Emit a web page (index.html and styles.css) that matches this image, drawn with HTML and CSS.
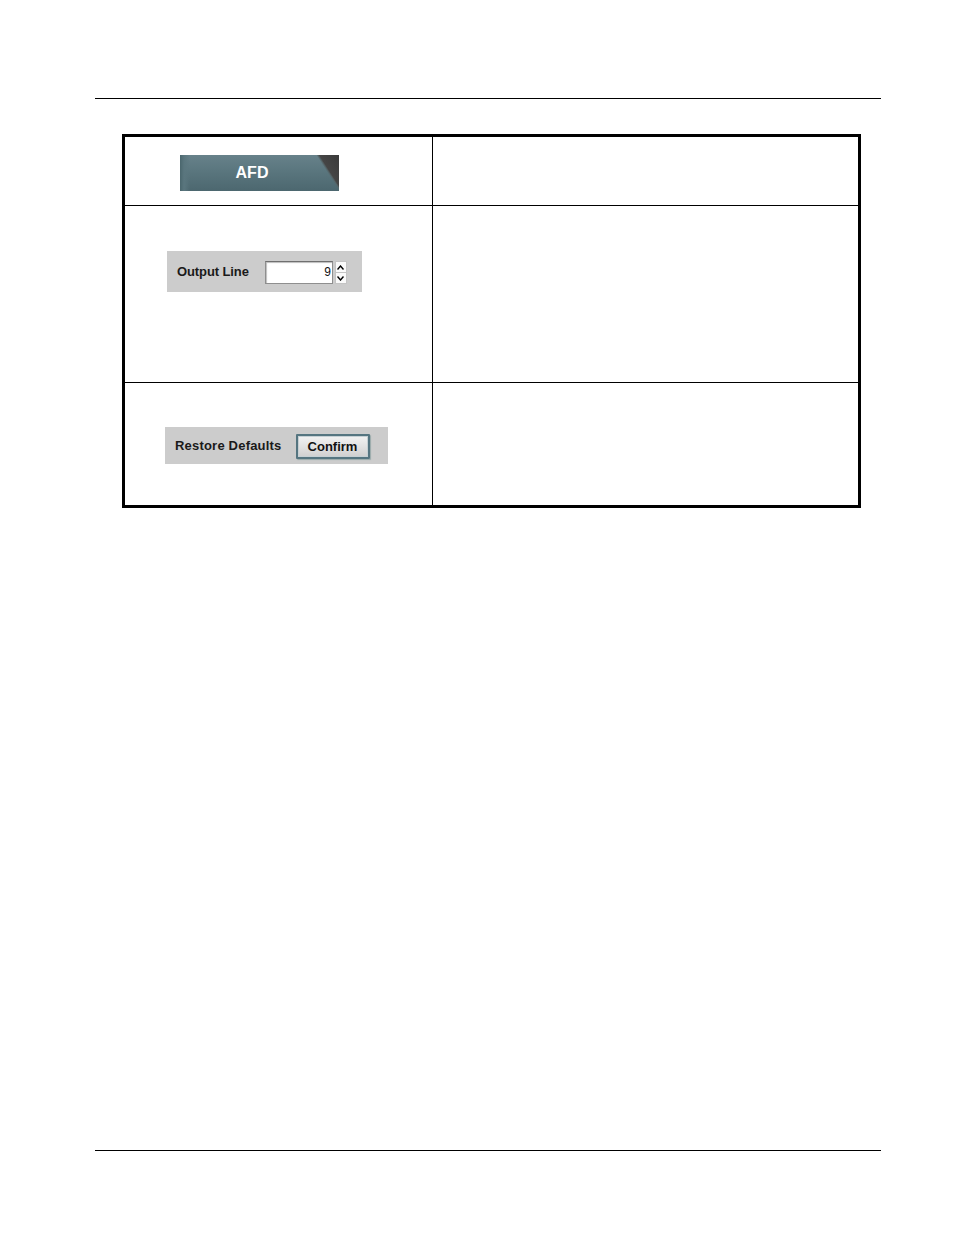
FILE: index.html
```html
<!DOCTYPE html>
<html>
<head>
<meta charset="utf-8">
<link rel="stylesheet" href="styles.css">
</head>
<body>
<div class="page">
  <div class="rule"></div>
  <div class="table">
    <div class="cell left r1">
      <div class="afd">AFD</div>
    </div>
    <div class="cell right r1"></div>
    <div class="cell left r2">
      <div class="panel panel-out">
        <span class="label">Output Line</span>
        <div class="spin">
          <div class="spin-input">9</div>
          <div class="spin-btns">
            <div class="sb">
              <svg width="7" height="5" viewBox="0 0 7 5"><path d="M0.5 4.5 L3.5 1 L6.5 4.5" fill="none" stroke="#000" stroke-width="1.4"/></svg>
            </div>
            <div class="sb">
              <svg width="7" height="5" viewBox="0 0 7 5"><path d="M0.5 0.5 L3.5 4 L6.5 0.5" fill="none" stroke="#000" stroke-width="1.4"/></svg>
            </div>
          </div>
        </div>
      </div>
    </div>
    <div class="cell right r2"></div>
    <div class="cell left r3 last">
      <div class="panel panel-rest">
        <span class="label label-rest">Restore Defaults</span>
        <div class="confirm">Confirm</div>
      </div>
    </div>
    <div class="cell right r3 last"></div>
  </div>
  <div class="rule footer"></div>
</div>
</body>
</html>
```

FILE: styles.css
```css
html, body {
  margin: 0;
  padding: 0;
  background: #fff;
}
body {
  font-family: "Liberation Sans", Arial, sans-serif;
}
.page {
  height: 1235px;
  box-sizing: border-box;
  padding: 98px 73px 84px 95px;
  display: flex;
  flex-direction: column;
}
.rule {
  height: 1px;
  background: #000;
  width: 786px;
}
.footer {
  margin-top: auto;
}
.table {
  margin-top: 35px;
  margin-left: 27px;
  width: 739px;
  box-sizing: border-box;
  border: 3px solid #000;
  display: grid;
  grid-template-columns: 308px 425px;
}
.cell {
  border-bottom: 1px solid #000;
  box-sizing: content-box;
}
.cell.left {
  border-right: 1px solid #000;
}
.cell.last {
  border-bottom: none;
}
.r1 { height: 68px; }
.r2 { height: 176px; }
.r3 { height: 122px; }

.afd {
  margin: 18px 0 0 55px;
  width: 159px;
  height: 36px;
  display: flex;
  align-items: center;
  justify-content: center;
  color: #fff;
  font-weight: bold;
  font-size: 16px;
  padding-right: 15px;
  padding-bottom: 1px;
  box-sizing: border-box;
  background:
    linear-gradient(57.5deg, transparent 0 87.5%, #55666a 88.3%, #454545 89.2%, #3a3a3a 100%),
    linear-gradient(to right, #4a666d 0, #5a767e 4px, transparent 10px),
    linear-gradient(to bottom, #67818a 0%, #5a767e 45%, #4c676f 100%);
}

.panel {
  background: #cccccc;
  display: flex;
  align-items: center;
  box-sizing: border-box;
}
.panel-out {
  margin: 45px 0 0 42px;
  width: 195px;
  height: 41px;
  padding-left: 10px;
}
.label {
  font-weight: bold;
  font-size: 13px;
  color: #1a1a1a;
  letter-spacing: -0.1px;
}
.label-rest {
  letter-spacing: 0.2px;
}
.spin {
  margin-left: 16px;
  display: flex;
  align-items: center;
  height: 23px;
  margin-top: 2px;
}
.spin-input {
  width: 68px;
  height: 23px;
  box-sizing: border-box;
  background: #fff;
  border: 1px solid #8e8e8e;
  border-top-color: #6f6f6f;
  box-shadow: inset 1px 1px 1px #bdbdbd;
  text-align: right;
  font-size: 12px;
  line-height: 21px;
  padding-right: 1px;
  color: #111;
}
.spin-btns {
  margin-left: 2px;
  width: 12px;
  height: 23px;
  display: flex;
  flex-direction: column;
}
.sb {
  flex: 1;
  background: #fafafa;
  border: 1px solid #c4c4c4;
  box-sizing: border-box;
  display: flex;
  align-items: center;
  justify-content: center;
}
.sb + .sb {
  border-top: none;
}

.panel-rest {
  margin: 44px 0 0 40px;
  width: 223px;
  height: 37px;
  padding-left: 10px;
}
.confirm {
  margin-left: 14px;
  margin-top: 1px;
  width: 74px;
  height: 25px;
  box-sizing: border-box;
  border: 2px solid #557580;
  border-radius: 1px;
  background: linear-gradient(to bottom, #f2f2f2 0%, #e2e2e2 50%, #cfcfcf 100%);
  box-shadow: inset 0 0 0 1px #c6d0d4, 1px 1px 1px #9aa;
  display: flex;
  align-items: center;
  justify-content: center;
  font-weight: bold;
  font-size: 13px;
  color: #111;
  padding-top: 1px;
}
```
